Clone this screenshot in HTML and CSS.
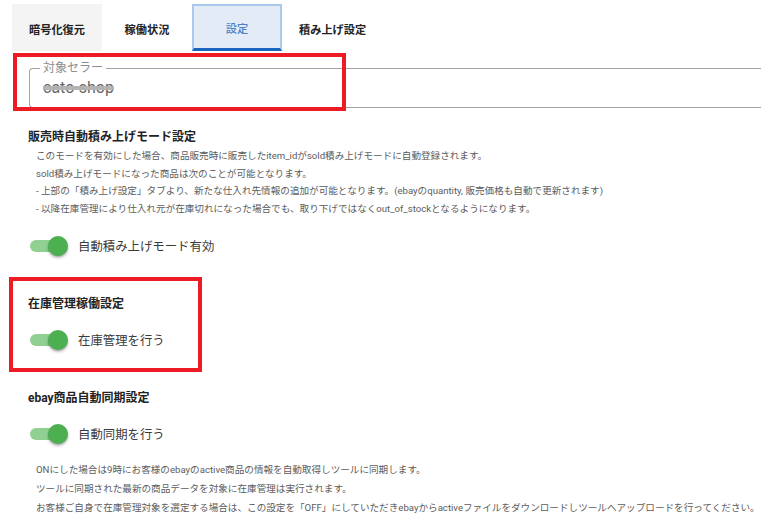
FILE: index.html
```html
<!DOCTYPE html>
<html lang="ja">
<head>
<meta charset="utf-8">
<title>設定</title>
<link rel="stylesheet" href="styles.css">
</head>
<body>
<div class="page">
  <nav class="tabs">
    <div class="tab tab-gray">暗号化復元</div>
    <div class="tab">稼働状況</div>
    <div class="tab tab-active">設定</div>
    <div class="tab">積み上げ設定</div>
  </nav>

  <fieldset class="field">
    <legend class="field-label">対象セラー</legend>
    <div class="field-value"><span class="redacted">cato-shop</span></div>
  </fieldset>

  <section class="section s1">
    <h2 class="heading">販売時自動積み上げモード設定</h2>
    <div class="desc">
      <p>このモードを有効にした場合、商品販売時に販売したitem_idがsold積み上げモードに自動登録されます。</p>
      <p>sold積み上げモードになった商品は次のことが可能となります。</p>
      <p>- 上部の「積み上げ設定」タブより、新たな仕入れ先情報の追加が可能となります。(ebayのquantity, 販売価格も自動で更新されます)</p>
      <p>- 以降在庫管理により仕入れ元が在庫切れになった場合でも、取り下げではなくout_of_stockとなるようになります。</p>
    </div>
    <div class="switch-row first">
      <span class="track"></span><span class="thumb"></span>
      <span class="switch-label">自動積み上げモード有効</span>
    </div>
  </section>

  <section class="section s2">
    <h2 class="heading">在庫管理稼働設定</h2>
    <div class="switch-row">
      <span class="track"></span><span class="thumb"></span>
      <span class="switch-label">在庫管理を行う</span>
    </div>
  </section>

  <section class="section s3">
    <h2 class="heading">ebay商品自動同期設定</h2>
    <div class="switch-row">
      <span class="track"></span><span class="thumb"></span>
      <span class="switch-label">自動同期を行う</span>
    </div>
    <div class="notes">
      <p>ONにした場合は9時にお客様のebayのactive商品の情報を自動取得しツールに同期します。</p>
      <p>ツールに同期された最新の商品データを対象に在庫管理は実行されます。</p>
      <p>お客様ご自身で在庫管理対象を選定する場合は、この設定を「OFF」にしていただきebayからactiveファイルをダウンロードしツールへアップロードを行ってください。</p>
    </div>
  </section>

  <div class="mark mark-seller"></div>
  <div class="mark mark-stock"></div>
</div>
</body>
</html>
```

FILE: styles.css
```css
html, body {
  margin: 0;
  padding: 0;
  background: #ffffff;
  overflow: hidden;
}

body {
  font-family: Roboto, "Noto Sans CJK JP", "Noto Sans", sans-serif;
  color: #222;
  width: 761px;
  height: 517px;
}

.page {
  position: relative;
  width: 761px;
  height: 517px;
  overflow: hidden;
}

p { margin: 0; }

/* tabs */
.tabs {
  display: flex;
  margin: 4px 0 0 12px;
  height: 47px;
}

.tab {
  box-sizing: border-box;
  min-width: 90px;
  padding: 0 17px;
  display: flex;
  align-items: center;
  justify-content: center;
  font-size: 11.2px;
  font-weight: 700;
  color: #222;
  padding-top: 2px;
}

.tab-gray {
  background: #f4f4f4;
}

.tab-active {
  background: #e3ebf6;
  border: 2px solid #abc9ec;
  border-bottom: 3px solid #1a64c0;
  color: #4a7fc6;
  font-weight: 500;
}

/* outlined field (continues past the right edge) */
.field {
  margin: 10px 0 0 29px;
  padding: 3px 13px 9px 13px;
  border: 1px solid #a2a2a2;
  border-right: none;
  border-radius: 4px 0 0 4px;
  min-width: 0;
}

.field-label {
  padding: 0 3px;
  margin-left: -3px;
  font-size: 12px;
  line-height: 14px;
  color: #8c8c8c;
}

.field-value {
  font-size: 16px;
  line-height: 20px;
  color: #666;
}

.redacted {
  text-decoration: line-through;
  text-decoration-thickness: 4px;
  text-decoration-color: rgba(178, 178, 178, 0.95);
  padding-right: 2px;
}

/* sections */
.section {
  padding-left: 28px;
}

.heading {
  margin: 0;
  font-size: 12px;
  line-height: 16px;
  font-weight: 700;
  color: #222;
}

.s1 { margin-top: 21px; }
.s2 { margin-top: 38px; }
.s3 { margin-top: 38px; }

.desc {
  margin-top: 2px;
  padding-left: 8px;
  font-size: 9.6px;
  line-height: 17.6px;
  color: #5c5c5c;
  white-space: nowrap;
}

/* switch */
.switch-row {
  display: flex;
  align-items: center;
  height: 24px;
  margin-top: 16px;
  padding-left: 2px;
}

.switch-row.first {
  margin-top: 17px;
}

.track {
  width: 34px;
  height: 12px;
  border-radius: 6px;
  background: #90d093;
}

.thumb {
  width: 20px;
  height: 20px;
  border-radius: 50%;
  background: #4caf50;
  margin-left: -16px;
  box-shadow: 0 2px 3px rgba(0, 0, 0, 0.28), 0 1px 1px rgba(0, 0, 0, 0.12);
}

.switch-label {
  margin-left: 10px;
  font-size: 12.4px;
  color: #3a3a3a;
}

.notes {
  margin-top: 15px;
  padding-left: 8px;
  font-size: 9.6px;
  line-height: 18.8px;
  color: #5c5c5c;
  white-space: nowrap;
}

/* red annotation frames */
.mark {
  position: absolute;
  box-sizing: border-box;
  border: 4px solid #ed1c24;
}

.mark-seller {
  left: 13px;
  top: 53px;
  width: 333px;
  height: 58px;
}

.mark-stock {
  left: 9px;
  top: 277px;
  width: 193px;
  height: 95px;
}
```
